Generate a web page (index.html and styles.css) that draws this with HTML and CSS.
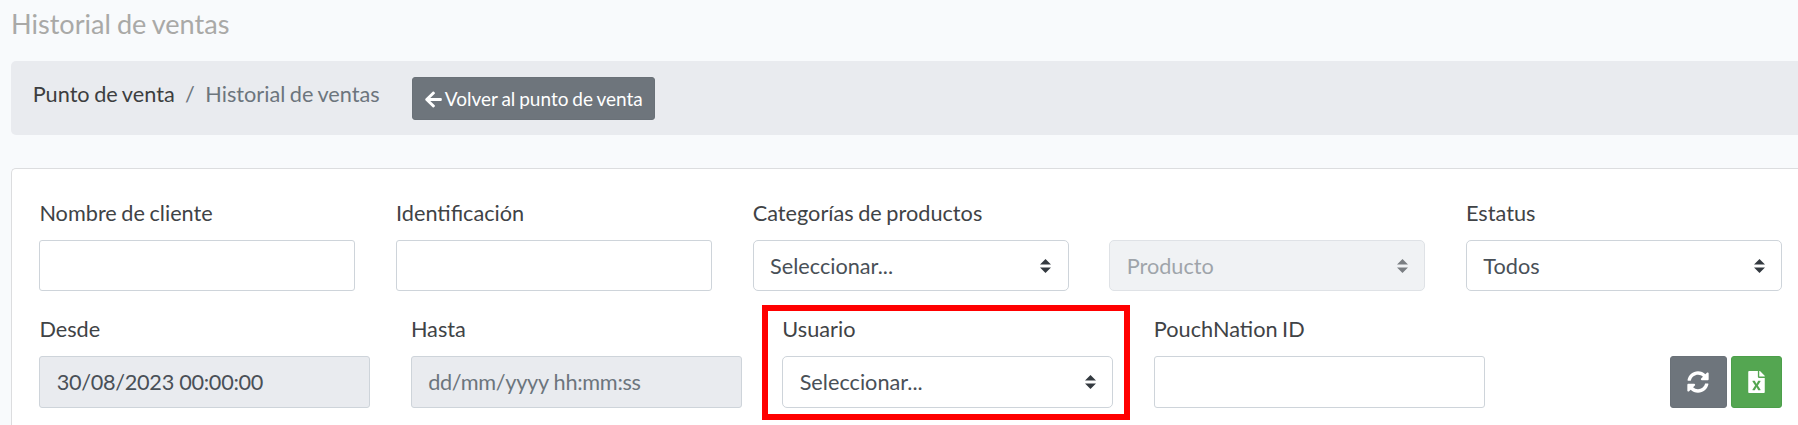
FILE: index.html
```html
<!DOCTYPE html>
<html lang="es">

<head>
    <meta charset="UTF-8">
    <meta name="viewport" content="width=device-width, initial-scale=1.0">
    <title>Historial de ventas</title>
    <link rel="stylesheet" href="styles.css">
</head>

<body>
    <h1 class="page-title">Historial de ventas</h1>

    <nav class="breadcrumb">
        <a class="breadcrumb-link" href="#">Punto de venta</a>
        <span class="breadcrumb-separator">/</span>
        <span class="breadcrumb-current">Historial de ventas</span>
        <a class="btn btn-secondary btn-back" href="#">
            <svg class="icon-arrow" viewBox="0 0 448 512" fill="currentColor"><path d="M257.5 445.1l-22.2 22.2c-9.4 9.4-24.6 9.4-33.9 0L7 273c-9.4-9.4-9.4-24.6 0-33.9L201.4 44.7c9.4-9.4 24.6-9.4 33.9 0l22.2 22.2c9.5 9.5 9.3 25-.4 34.3L136.6 216H424c13.3 0 24 10.7 24 24v32c0 13.3-10.7 24-24 24H136.6l120.5 114.8c9.8 9.3 10 24.8.4 34.3z"/></svg>
            <span>Volver al punto de venta</span>
        </a>
    </nav>

    <form class="card">
        <div class="row">
            <div class="form-group">
                <label class="form-label" for="cliente">Nombre de cliente</label>
                <input class="form-control" id="cliente" type="text">
            </div>
            <div class="form-group">
                <label class="form-label" for="identificacion">Identificación</label>
                <input class="form-control" id="identificacion" type="text">
            </div>
            <div class="form-group">
                <label class="form-label" for="categoria">Categorías de productos</label>
                <select class="form-control form-select" id="categoria">
                    <option>Seleccionar...</option>
                </select>
            </div>
            <div class="form-group form-group-end">
                <select class="form-control form-select" id="producto" disabled>
                    <option>Producto</option>
                </select>
            </div>
            <div class="form-group">
                <label class="form-label" for="estatus">Estatus</label>
                <select class="form-control form-select" id="estatus">
                    <option>Todos</option>
                </select>
            </div>
        </div>

        <div class="row row-filters">
            <div class="form-group">
                <label class="form-label" for="desde">Desde</label>
                <input class="form-control form-date" id="desde" type="text" value="30/08/2023 00:00:00" readonly>
            </div>
            <div class="form-group">
                <label class="form-label" for="hasta">Hasta</label>
                <input class="form-control form-date" id="hasta" type="text" placeholder="dd/mm/yyyy hh:mm:ss" readonly>
            </div>
            <div class="form-group form-group-marked">
                <label class="form-label" for="usuario">Usuario</label>
                <select class="form-control form-select" id="usuario">
                    <option>Seleccionar...</option>
                </select>
                <div class="marker"></div>
            </div>
            <div class="form-group">
                <label class="form-label" for="pouch">PouchNation ID</label>
                <input class="form-control" id="pouch" type="text">
            </div>
            <div class="actions">
                <button class="btn btn-secondary btn-refresh" type="button" aria-label="Actualizar">
                    <svg class="icon-sync" viewBox="0 0 512 512" fill="currentColor"><path d="M370.720 133.280C339.458 104.008 298.888 87.962 255.848 88c-77.458.068-144.328 53.178-162.791 126.850-1.344 5.363-6.122 9.150-11.651 9.150H24.103c-7.498 0-13.194-6.807-11.807-14.176C33.933 94.924 134.813 8 256 8c66.448 0 126.791 26.136 171.315 68.685L463.030 40.970C478.149 25.851 504 36.559 504 57.941V192c0 13.255-10.745 24-24 24H345.941c-21.382 0-32.090-25.851-16.971-40.971l41.750-41.749zM32 296h134.059c21.382 0 32.090 25.851 16.971 40.971l-41.750 41.750c31.262 29.273 71.835 45.319 114.876 45.280 77.418-.070 144.315-53.144 162.787-126.849 1.344-5.363 6.122-9.150 11.651-9.150h57.304c7.498 0 13.194 6.807 11.807 14.176C478.067 417.076 377.187 504 256 504c-66.448 0-126.791-26.136-171.315-68.685L48.970 471.030C33.851 486.149 8 475.441 8 454.059V320c0-13.255 10.745-24 24-24z"/></svg>
                </button>
                <button class="btn btn-success btn-excel" type="button" aria-label="Exportar a Excel">
                    <svg class="icon-file" viewBox="0 0 384 512" fill="currentColor"><path d="M224 136V0H24C10.7 0 0 10.7 0 24v464c0 13.3 10.7 24 24 24h336c13.3 0 24-10.7 24-24V160H248c-13.200 0-24-10.800-24-24zm60.100 106.500L224 336l60.100 93.500c5.100 8-.6 18.500-10.100 18.500h-34.900c-4.400 0-8.500-2.400-10.600-6.300C208.900 405.500 192 373 192 373c-6.400 14.800-10 20-36.600 68.800-2.100 3.900-6.100 6.300-10.500 6.300H110c-9.500 0-15.200-10.500-10.100-18.500l60.300-93.500-60.300-93.500c-5.200-8 .6-18.500 10.100-18.500h34.800c4.400 0 8.500 2.400 10.600 6.300 26.100 48.800 20 33.600 36.600 68.500 0 0 6.100-11.700 36.600-68.500 2.100-3.900 6.200-6.300 10.600-6.300H274c9.500-.1 15.200 10.400 10.100 18.400zM384 121.900v6.100H256V0h6.100c6.400 0 12.500 2.500 17 7l97.900 98c4.500 4.500 7 10.600 7 16.900z"/></svg>
                </button>
            </div>
        </div>
    </form>
</body>

</html>
```

FILE: styles.css
```css
* {
    box-sizing: border-box;
}

body {
    display: flex;
    flex-direction: column;
    margin: 0;
    padding: 8px 0 0 11px;
    height: 425px;
    background-color: #f8fafc;
    color: #3f4346;
    font-family: Lato, "Liberation Sans", sans-serif;
    font-size: 21.7px;
    line-height: 32.6px;
    word-spacing: -1px;
}

.page-title {
    margin: 0 0 20.9px;
    color: #a9a9a7;
    font-size: 27.1px;
    font-weight: 400;
    line-height: 32.5px;
}

/* Breadcrumb bar */
.breadcrumb {
    display: flex;
    align-items: flex-start;
    height: 74px;
    padding: 16px 21.7px;
    margin-bottom: 33px;
    background-color: #e9ebef;
    border-radius: 5px 0 0 5px;
}

.breadcrumb-link,
.breadcrumb-separator,
.breadcrumb-current {
    padding-top: 1px;
}

.breadcrumb-link {
    color: #3c3e40;
    text-decoration: none;
}

.breadcrumb-separator {
    padding-left: 10.4px;
    padding-right: 10.4px;
    color: #6c757d;
}

.breadcrumb-current {
    color: #6c757d;
}

/* Buttons */
.btn {
    display: flex;
    align-items: center;
    justify-content: center;
    border: 1px solid transparent;
    border-radius: 3px;
    color: #fff;
    text-decoration: none;
    cursor: pointer;
}

.btn-secondary {
    background-color: #6e757c;
    border-color: #6a7178;
}

.btn-success {
    background-color: #54a651;
    border-color: #4c9f4a;
}

.btn-back {
    gap: 3px;
    width: 243px;
    height: 42.3px;
    margin-left: 32.5px;
    padding-top: 1px;
    font-size: 19px;
}

.btn-refresh {
    width: 57px;
    height: 51.5px;
    padding: 0;
}

.btn-excel {
    width: 51.5px;
    height: 51.5px;
    padding: 0;
}

.icon-arrow {
    width: 17px;
    height: 19px;
}

.icon-sync {
    width: 22px;
    height: 22px;
}

.icon-file {
    width: 17px;
    height: 22px;
}

/* Filters */
.card {
    flex: 1;
    padding: 28px 16px 0 27.4px;
    background-color: #fff;
    border: 1px solid #dcdddf;
    border-right: none;
    border-bottom: none;
    border-radius: 5px 0 0 0;
}

.row {
    display: grid;
    grid-template-columns: repeat(5, 1fr);
    column-gap: 40.7px;
    margin-bottom: 22px;
}

.row-filters {
    grid-template-columns: repeat(4, 330.8px) 1fr;
    margin-bottom: 0;
}

.form-group {
    display: flex;
    flex-direction: column;
}

.form-group-end {
    justify-content: flex-end;
}

.form-label {
    margin-bottom: 10px;
}

.form-control {
    width: 100%;
    height: 51.5px;
    padding: 0 16.3px;
    background-color: #fff;
    border: 1px solid #ced4da;
    border-radius: 3px;
    color: #495057;
    font-family: inherit;
    font-size: inherit;
}

.form-control:read-only:not(select) {
    background-color: #e9ebef;
}

.form-control::placeholder {
    color: #6c757d;
    opacity: 1;
}

.form-date {
    letter-spacing: -0.3px;
}

.form-select {
    appearance: none;
    background: #fff url("data:image/svg+xml,%3csvg xmlns='http://www.w3.org/2000/svg' viewBox='0 0 4 5'%3e%3cpath fill='%23343a40' d='M2 0L0 2h4zm0 5L0 3h4z'/%3e%3c/svg%3e") no-repeat right 16.3px center / 10.9px 13.6px;
    border-radius: 5px;
}

.form-select:disabled {
    background-color: #e9ecef;
    color: #6c757d;
    opacity: 0.65;
}

.actions {
    display: flex;
    align-items: flex-end;
    justify-content: flex-end;
    gap: 4px;
}

/* Red frame around the user filter */
.form-group-marked {
    position: relative;
}

.marker {
    position: absolute;
    top: -8px;
    right: -17px;
    bottom: -12px;
    left: -20px;
    border: 6px solid #f00;
    pointer-events: none;
}
```
